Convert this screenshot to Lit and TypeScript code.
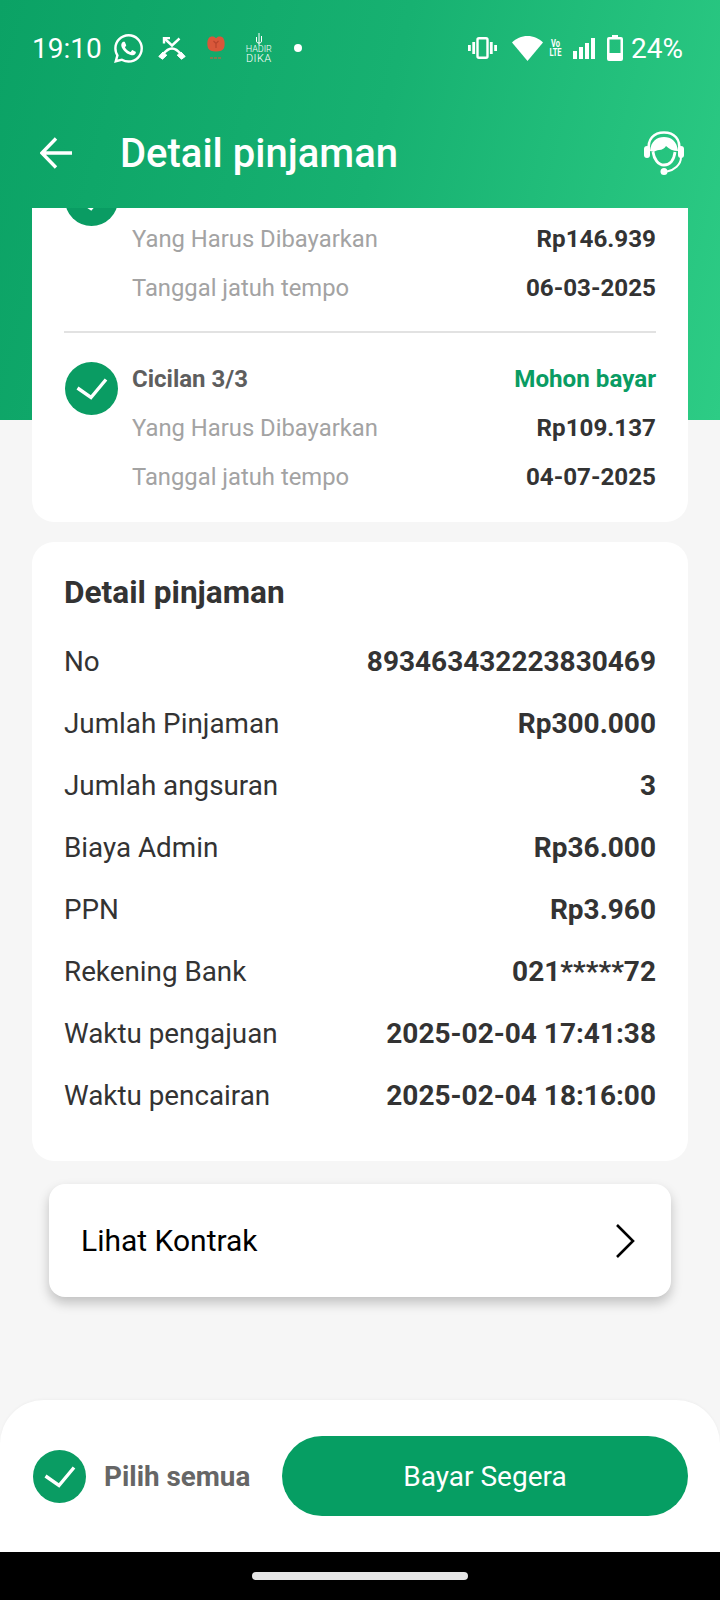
import { LitElement, html, css, svg } from 'lit';
import { customElement } from 'lit/decorators.js';

const installments = [
  { title: '', status: '', amount: 'Rp146.939', due: '06-03-2025' },
  { title: 'Cicilan 3/3', status: 'Mohon bayar', amount: 'Rp109.137', due: '04-07-2025' },
];

const details = [
  ['No', '893463432223830469'],
  ['Jumlah Pinjaman', 'Rp300.000'],
  ['Jumlah angsuran', '3'],
  ['Biaya Admin', 'Rp36.000'],
  ['PPN', 'Rp3.960'],
  ['Rekening Bank', '021*****72'],
  ['Waktu pengajuan', '2025-02-04 17:41:38'],
  ['Waktu pencairan', '2025-02-04 18:16:00'],
];

const checkIcon = svg`<svg class="check" viewBox="0 0 53 53">
  <circle cx="26.5" cy="26.5" r="26.5" fill="#0a9c63"></circle>
  <path d="M12.500 26l13.500 9.500L41 17.500" fill="none" stroke="#fff" stroke-width="3.4"></path>
</svg>`;

@customElement('app-root')
export class AppRoot extends LitElement {
  static styles = css`
    :host {
      display: block;
      width: 720px;
      height: 1600px;
      background: #f6f6f6;
      font-family: Roboto, 'Liberation Sans', sans-serif;
      color: #333;
    }
    .page {
      display: flex;
      flex-direction: column;
      height: 1600px;
      overflow: hidden;
    }
    .hero {
      flex: none;
      height: 420px;
      background: linear-gradient(104deg, #0ba265 0%, #17b171 50%, #2dcc85 100%);
      color: #fff;
    }
    .status {
      display: flex;
      align-items: center;
      height: 96px;
      padding: 0 37px 0 32px;
      box-sizing: border-box;
      font-size: 28px;
    }
    .status svg {
      display: block;
      flex: none;
    }
    .spacer {
      flex: 1;
    }
    .whatsapp {
      margin-left: 12px;
    }
    .missed {
      margin-left: 15px;
    }
    .red {
      margin-left: 21px;
    }
    .hadir {
      display: flex;
      flex-direction: column;
      align-items: center;
      width: 30px;
      margin-left: 19px;
      font-weight: 300;
      line-height: 9px;
      font-size: 9px;
    }
    .hadir span:last-child {
      font-size: 11px;
      letter-spacing: 0.4px;
    }
    .dot {
      width: 8px;
      height: 8px;
      margin-left: 20px;
      border-radius: 50%;
      background: #fff;
    }
    .wifi {
      margin-left: 15px;
    }
    .volte {
      display: flex;
      flex-direction: column;
      align-items: center;
      width: 13px;
      margin-left: 6px;
      font-size: 10px;
      font-weight: 700;
      line-height: 9px;
      transform: scaleX(0.75);
    }
    .signal {
      margin-left: 11px;
    }
    .battery {
      margin-left: 12px;
    }
    .percent {
      margin-left: 8px;
    }
    .nav {
      display: flex;
      align-items: center;
      height: 112px;
      padding: 2px 36px 0 40px;
      box-sizing: border-box;
    }
    .nav h1 {
      flex: 1;
      margin: 0 0 0 48px;
      font-size: 40px;
      font-weight: 500;
    }
    .nav svg {
      display: block;
    }
    .scroll {
      flex: none;
      height: 1192px;
      margin-top: -212px;
      padding: 0 32px;
      box-sizing: border-box;
      overflow: hidden;
    }
    .card {
      display: flex;
      flex-direction: column;
      background: #fff;
      border-radius: 22px;
      padding: 0 32px;
    }
    .plan {
      height: 314px;
      box-sizing: border-box;
      border-radius: 0 0 22px 22px;
    }
    .item {
      display: grid;
      grid-template-columns: 68px 1fr;
      padding-bottom: 19px;
    }
    .item:first-child {
      margin-top: -43px;
    }
    .item + .item {
      padding-top: 21px;
      padding-bottom: 20px;
      border-top: 2px solid #e2e2e2;
    }
    .check {
      display: block;
      width: 53px;
      height: 53px;
    }
    .item .check {
      margin: 8px 0 0 1px;
    }
    .row {
      display: flex;
      justify-content: space-between;
      align-items: center;
      height: 49px;
      font-size: 23.8px;
      color: #a3a3a3;
    }
    .row b {
      font-size: 24.2px;
      font-weight: 700;
      color: #333;
    }
    .row .name {
      color: #5e5e5e;
      font-weight: 700;
      font-size: 24px;
    }
    .row .state {
      color: #0a9c63;
    }
    .loan {
      margin-top: 20px;
      padding-top: 29px;
      padding-bottom: 35px;
    }
    .loan h2 {
      margin: 0 0 15px;
      height: 44px;
      line-height: 44px;
      font-size: 31.6px;
      font-weight: 700;
    }
    .loan div {
      display: flex;
      justify-content: space-between;
      align-items: center;
      height: 62px;
      font-size: 27.8px;
    }
    .loan b {
      font-size: 28px;
      font-weight: 700;
    }
    .contract {
      display: flex;
      justify-content: space-between;
      align-items: center;
      height: 113px;
      margin: 23px 17px 0;
      padding: 0 36px 0 32px;
      box-sizing: border-box;
      background: #fff;
      border-radius: 16px;
      box-shadow: 0 6px 12px rgba(0, 0, 0, 0.22);
      font-size: 30px;
      color: #000;
    }
    .sheet {
      display: flex;
      align-items: center;
      flex: none;
      height: 152px;
      padding: 0 32px 0 33px;
      box-sizing: border-box;
      background: #fff;
      border-radius: 44px 44px 0 0;
      box-shadow: 0 -1px 3px rgba(0, 0, 0, 0.03);
    }
    .sheet span {
      flex: 1;
      margin-left: 18px;
      font-size: 27.8px;
      font-weight: 700;
      color: #666;
    }
    .pay {
      width: 406px;
      height: 80px;
      border: 0;
      border-radius: 40px;
      background: #069e63;
      color: #fff;
      font: 400 28px Roboto, 'Liberation Sans', sans-serif;
    }
    .home {
      display: flex;
      justify-content: center;
      align-items: center;
      flex: none;
      height: 48px;
      background: #000;
    }
    .home i {
      width: 216px;
      height: 8px;
      border-radius: 4px;
      background: #e6e6e6;
    }
  `;

  renderStatus() {
    return html`<div class="status">
      <span>19:10</span>
      <svg class="whatsapp" width="29" height="29" viewBox="0 0 24 24" fill="#fff">
        <path d="M17.472 14.382c-.297-.149-1.758-.867-2.03-.967-.273-.099-.471-.148-.67.15-.197.297-.767.966-.94 1.164-.173.199-.347.223-.644.075-.297-.15-1.255-.463-2.39-1.475-.883-.788-1.48-1.761-1.653-2.059-.173-.297-.018-.458.13-.606.134-.133.298-.347.446-.52.149-.174.198-.298.298-.497.099-.198.05-.371-.025-.52-.075-.149-.669-1.612-.916-2.207-.242-.579-.487-.5-.669-.51-.173-.008-.371-.01-.57-.01-.198 0-.52.074-.792.372-.272.297-1.04 1.016-1.04 2.479 0 1.462 1.065 2.875 1.213 3.074.149.198 2.096 3.2 5.077 4.487.709.306 1.262.489 1.694.625.712.227 1.36.195 1.871.118.571-.085 1.758-.719 2.006-1.413.248-.694.248-1.289.173-1.413-.074-.124-.272-.198-.57-.347m-5.421 7.403h-.004a9.87 9.87 0 01-5.031-1.378l-.361-.214-3.741.982.998-3.648-.235-.374a9.86 9.86 0 01-1.51-5.26c.001-5.45 4.436-9.884 9.888-9.884 2.64 0 5.122 1.03 6.988 2.898a9.825 9.825 0 012.893 6.994c-.003 5.45-4.437 9.884-9.885 9.884m8.413-18.297A11.815 11.815 0 0012.05 0C5.495 0 .16 5.335.157 11.892c0 2.096.547 4.142 1.588 5.945L.057 24l6.305-1.654a11.882 11.882 0 005.683 1.448h.005c6.554 0 11.89-5.335 11.893-11.893a11.821 11.821 0 00-3.48-8.413z"></path>
      </svg>
      <svg class="missed" width="28" height="23" viewBox="0 0 28 23" fill="none" stroke="#fff">
        <path d="M7 2l7 6.500 7.500-7" stroke-width="2.400"></path>
        <path d="M6 6.500V1h6" stroke-width="2.400"></path>
        <path d="M5 17.500C8 13.500 11 11.500 14 11.500s6 2 9 6" stroke-width="2.400"></path>
        <path d="M.8 19.500l4.200-4.500 3.800 3.200-4.300 4zM27.200 19.500L23 15l-3.800 3.200 4.300 4z" fill="#fff" stroke-width="1"></path>
      </svg>
      <svg class="red" width="18" height="24" viewBox="0 0 18 24">
        <path d="M8.500 2C7 0 3 0 1.500 2.500S0 9 1 12c1 2.500 4 3.500 8 3.500s7-1 8-3.500 1-7-.5-9.500S11 0 9.500 2z" fill="#d9573a"></path>
        <path d="M6.500 5L9 7.500 11.500 5M9 7.500V12" fill="none" stroke="#b8432c" stroke-width="1.200"></path>
        <path d="M3 22h12" stroke="#c9603f" stroke-width="2" stroke-dasharray="3 1" opacity=".6"></path>
      </svg>
      <div class="hadir">
        <svg width="12" height="12" viewBox="0 0 12 12" fill="none" stroke="#fff" stroke-width="1">
          <path d="M6 0v12M3.500 4v4c0 1.500 1 2 2.500 2s2.500-.5 2.500-2V3"></path>
        </svg>
        <span>HADIR</span>
        <span>DIKA</span>
      </div>
      <i class="dot"></i>
      <div class="spacer"></div>
      <svg width="29" height="22" viewBox="0 0 29 22" fill="#fff">
        <path d="M0 8h2.800v6H0zM26.200 8H29v6h-2.800zM4.300 5h2.800v12H4.300zM21.900 5h2.800v12h-2.800z"></path>
        <rect x="9.500" y="1.200" width="10" height="19.600" rx="1.500" fill="none" stroke="#fff" stroke-width="2.400"></rect>
      </svg>
      <svg class="wifi" width="31" height="25" viewBox="0 0 31 25" fill="#fff">
        <path d="M15.500 25L0 6.500C4 2.500 9.500 0 15.500 0S27 2.500 31 6.500z"></path>
      </svg>
      <div class="volte"><span>Vo</span><span>LTE</span></div>
      <svg class="signal" width="22" height="21" viewBox="0 0 22 21" fill="#fff">
        <path d="M0 13h4v8H0zM6 9h4v12H6zM12 5h4v16h-4zM18 0h4v21h-4z"></path>
      </svg>
      <svg class="battery" width="16" height="26" viewBox="0 0 16 26" fill="#fff">
        <path d="M5 0h6v2h3a2 2 0 012 2v20a2 2 0 01-2 2H2a2 2 0 01-2-2V4a2 2 0 012-2h3zM2.500 4.500V18h11V4.500z"></path>
      </svg>
      <span class="percent">24%</span>
    </div>`;
  }

  renderNav() {
    return html`<div class="nav">
      <svg width="32" height="32" viewBox="0 0 32 32" fill="none" stroke="#fff" stroke-width="3.400">
        <path d="M32 16H2M16 1.500L1.800 16 16 30.500"></path>
      </svg>
      <h1>Detail pinjaman</h1>
      <svg width="40" height="44" viewBox="0 0 40 44" fill="none">
        <path d="M5 20C3 8 10 1.500 20 1.500S37 8 35 20" stroke="#fff" stroke-width="2.600"></path>
        <path d="M6 20C7 10 13 6 20 6s13 4 14 14c-5 0-9-2-12-5-1 2-4 4-7 4-2 0-4 1-5 2z" fill="#fff"></path>
        <path d="M9 21c1 7 5 13 11 13s10-5 11-13" stroke="#fff" stroke-width="2.800"></path>
        <rect x="0" y="15" width="6" height="12" rx="3" fill="#fff"></rect>
        <rect x="34" y="15" width="6" height="12" rx="3" fill="#fff"></rect>
        <path d="M37 26c0 8-7 13-14 14.500" stroke="#fff" stroke-width="2"></path>
        <circle cx="20" cy="40.500" r="3.500" fill="#fff"></circle>
      </svg>
    </div>`;
  }

  render() {
    return html`<div class="page">
      <div class="hero">${this.renderStatus()}${this.renderNav()}</div>
      <div class="scroll">
        <div class="card plan">
          ${installments.map(
            (item) => html`<div class="item">
              ${checkIcon}
              <div>
                <div class="row">
                  <span class="name">${item.title}</span><b class="state">${item.status}</b>
                </div>
                <div class="row"><span>Yang Harus Dibayarkan</span><b>${item.amount}</b></div>
                <div class="row"><span>Tanggal jatuh tempo</span><b>${item.due}</b></div>
              </div>
            </div>`
          )}
        </div>
        <div class="card loan">
          <h2>Detail pinjaman</h2>
          ${details.map(
            ([label, value]) => html`<div><span>${label}</span><b>${value}</b></div>`
          )}
        </div>
        <div class="contract">
          <span>Lihat Kontrak</span>
          <svg width="20" height="34" viewBox="0 0 20 34" fill="none" stroke="#000" stroke-width="2.600">
            <path d="M2 1l16 16L2 33"></path>
          </svg>
        </div>
      </div>
      <div class="sheet">
        ${checkIcon}
        <span>Pilih semua</span>
        <button class="pay">Bayar Segera</button>
      </div>
      <div class="home"><i></i></div>
    </div>`;
  }
}
